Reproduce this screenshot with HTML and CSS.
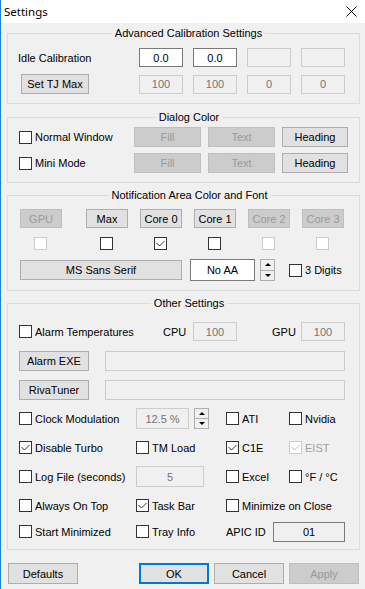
FILE: index.html
```html
<!DOCTYPE html>
<html lang="en">
<head>
    <meta charset="UTF-8">
    <meta name="viewport" content="width=device-width, initial-scale=1.0">
    <title>Settings</title>
    <link rel="stylesheet" href="styles.css">
</head>
<body>
<div class="window">
    <div class="titlebar">
        <span class="title">Settings</span>
        <svg class="close" width="11" height="11" viewBox="0 0 11 11"><path d="M0.5 0.5 10.5 10.5 M10.5 0.5 0.5 10.5"/></svg>
    </div>

    <div class="content">
        <fieldset class="group calib">
            <legend>Advanced Calibration Settings</legend>
            <div class="calib-grid">
                <span>Idle Calibration</span>
                <div class="edit">0.0</div>
                <div class="edit">0.0</div>
                <div class="edit off"></div>
                <div class="edit off"></div>
                <button class="btn tj">Set TJ Max</button>
                <div class="edit off">100</div>
                <div class="edit off">100</div>
                <div class="edit off">0</div>
                <div class="edit off">0</div>
            </div>
        </fieldset>

        <fieldset class="group dialog">
            <legend>Dialog Color</legend>
            <div class="dialog-grid">
                <label class="opt"><span class="box"></span>Normal Window</label>
                <button class="btn off">Fill</button>
                <button class="btn off">Text</button>
                <button class="btn">Heading</button>
                <label class="opt"><span class="box"></span>Mini Mode</label>
                <button class="btn off">Fill</button>
                <button class="btn off">Text</button>
                <button class="btn">Heading</button>
            </div>
        </fieldset>

        <fieldset class="group notify">
            <legend>Notification Area Color and Font</legend>
            <div class="cores">
                <button class="btn core off">GPU</button>
                <button class="btn core">Max</button>
                <button class="btn core">Core 0</button>
                <button class="btn core">Core 1</button>
                <button class="btn core off">Core 2</button>
                <button class="btn core off">Core 3</button>
                <span class="box off"></span>
                <span class="box"></span>
                <span class="box"><svg width="11" height="11" viewBox="0 0 11 11"><path d="M1.5 5 4.5 8 9.5 3"/></svg></span>
                <span class="box"></span>
                <span class="box off"></span>
                <span class="box off"></span>
            </div>
            <div class="font-row">
                <button class="btn font-btn">MS Sans Serif</button>
                <div class="edit white noaa">No AA</div>
                <span class="spin"><span><i class="up"></i></span><span><i class="down"></i></span></span>
                <label class="opt digits"><span class="box"></span>3 Digits</label>
            </div>
        </fieldset>

        <fieldset class="group other">
            <legend>Other Settings</legend>
            <div class="rows">
                <div class="row">
                    <label class="opt alarm"><span class="box"></span>Alarm Temperatures</label>
                    <span class="cap cpu">CPU</span>
                    <div class="edit off w44">100</div>
                    <span class="cap gpu">GPU</span>
                    <div class="edit off w44">100</div>
                </div>
                <div class="row">
                    <button class="btn exe">Alarm EXE</button>
                    <div class="edit off path"></div>
                </div>
                <div class="row">
                    <button class="btn exe">RivaTuner</button>
                    <div class="edit off path"></div>
                </div>
                <div class="row">
                    <label class="opt c1"><span class="box"></span>Clock Modulation</label>
                    <div class="c2">
                        <div class="edit off tall clock">12.5 %</div>
                        <span class="spin small"><span><i class="up"></i></span><span><i class="down"></i></span></span>
                    </div>
                    <label class="opt c3"><span class="box"></span>ATI</label>
                    <label class="opt"><span class="box"></span>Nvidia</label>
                </div>
                <div class="row">
                    <label class="opt c1"><span class="box"><svg width="11" height="11" viewBox="0 0 11 11"><path d="M1.5 5 4.5 8 9.5 3"/></svg></span>Disable Turbo</label>
                    <label class="opt c2"><span class="box"></span>TM Load</label>
                    <label class="opt c3"><span class="box"><svg width="11" height="11" viewBox="0 0 11 11"><path d="M1.5 5 4.5 8 9.5 3"/></svg></span>C1E</label>
                    <label class="opt dim"><span class="box off"><svg width="11" height="11" viewBox="0 0 11 11"><path d="M1.5 5 4.5 8 9.5 3"/></svg></span>EIST</label>
                </div>
                <div class="row">
                    <label class="opt c1"><span class="box"></span>Log File (seconds)</label>
                    <div class="c2"><div class="edit off tall log">5</div></div>
                    <label class="opt c3"><span class="box"></span>Excel</label>
                    <label class="opt"><span class="box"></span>°F / °C</label>
                </div>
                <div class="row">
                    <label class="opt c1"><span class="box"></span>Always On Top</label>
                    <label class="opt c2"><span class="box"><svg width="11" height="11" viewBox="0 0 11 11"><path d="M1.5 5 4.5 8 9.5 3"/></svg></span>Task Bar</label>
                    <label class="opt"><span class="box"></span>Minimize on Close</label>
                </div>
                <div class="row last">
                    <label class="opt c1"><span class="box"></span>Start Minimized</label>
                    <label class="opt c2"><span class="box"></span>Tray Info</label>
                    <span class="apic">APIC ID</span>
                    <div class="edit apic-id">01</div>
                </div>
            </div>
        </fieldset>

        <div class="footer">
            <button class="btn wide">Defaults</button>
            <button class="btn wide ok">OK</button>
            <button class="btn wide">Cancel</button>
            <button class="btn wide off">Apply</button>
        </div>
    </div>
</div>
</body>
</html>
```

FILE: styles.css
```css
body {
    margin: 0;
    background: #f0f0f0;
    font-family: "Liberation Sans", Arial, sans-serif;
    font-size: 11px;
    color: #000;
}
.window {
    height: 589px;
    border-left: 1px solid #1883d7;
    box-sizing: border-box;
}
.titlebar {
    height: 23px;
    background: #fff;
    display: flex;
    align-items: center;
    justify-content: space-between;
    padding: 0 8px 0 3px;
}
.title {
    font-family: "Noto Sans", sans-serif;
    font-size: 11.5px;
}
.close path {
    stroke: #000;
    stroke-width: 1;
    fill: none;
}
.content {
    padding: 0 5px 0 6px;
}

/* group boxes */
.group {
    margin: 5px 0 0;
    padding: 0 0 9px 11px;
    border: 1px solid #dcdcdc;
    min-width: 0;
}
.group legend {
    margin: 0 auto;
    padding: 0 3px;
    line-height: 15px;
}
.calib {
    margin-top: 3px;
    padding-top: 7px;
    padding-left: 10px;
}
.dialog {
    margin-top: 6px;
    padding-top: 2px;
}
.notify {
    padding-top: 6px;
    padding-left: 12px;
}
.other {
    padding-top: 10px;
    padding-bottom: 7px;
}

/* controls */
.btn {
    height: 20px;
    padding: 0;
    border: 1px solid #adadad;
    background: #e1e1e1;
    font: inherit;
    color: #000;
    box-sizing: border-box;
    white-space: nowrap;
}
.btn.off {
    background: #cccccc;
    border-color: #bfbfbf;
    color: #9a9a9a;
}
.edit {
    height: 19px;
    box-sizing: border-box;
    border: 1px solid #7a7a7a;
    background: #fff;
    display: flex;
    align-items: center;
    justify-content: center;
}
.edit.off {
    border-color: #cccccc;
    background: #f0f0f0;
    color: #747474;
}
.edit.tall {
    height: 21px;
}
.opt {
    display: flex;
    align-items: center;
    white-space: nowrap;
}
.box {
    width: 13px;
    height: 13px;
    box-sizing: border-box;
    border: 1px solid #333;
    background: #fff;
    margin-right: 3px;
    flex: none;
}
.box svg {
    display: block;
}
.box path {
    stroke: #333;
    stroke-width: 1;
    fill: none;
}
.box.off {
    border-color: #cccccc;
}
.box.off path {
    stroke: #bcbcbc;
}
.dim {
    color: #a0a0a0;
}
.spin {
    display: flex;
    flex-direction: column;
    width: 15px;
    height: 22px;
    flex: none;
}
.spin.small {
    height: 21px;
    margin-left: 5px;
}
.spin > span {
    flex: 1;
    display: flex;
    align-items: center;
    justify-content: center;
    background: #f0f0f0;
    border: 1px solid #adadad;
}
.spin > span + span {
    border-top: none;
}
.spin .up {
    border-left: 3px solid transparent;
    border-right: 3px solid transparent;
    border-bottom: 3px solid #000;
}
.spin .down {
    border-left: 3px solid transparent;
    border-right: 3px solid transparent;
    border-top: 3px solid #000;
}

/* advanced calibration */
.calib-grid {
    display: grid;
    grid-template-columns: 111px repeat(4, 44px);
    grid-template-rows: 19px 20px;
    column-gap: 10px;
    row-gap: 7px;
    align-items: center;
}
.tj {
    width: 68px;
    margin-left: 3px;
}

/* dialog color */
.dialog-grid {
    display: grid;
    grid-template-columns: 108px 67px 67px 66px;
    grid-template-rows: 20px 20px;
    column-gap: 7px;
    row-gap: 6px;
    align-items: center;
}

/* notification area */
.cores {
    display: grid;
    grid-template-columns: 66px repeat(5, 54px);
    grid-template-rows: 19px 13px;
    row-gap: 9px;
}
.core {
    width: 42px;
    height: 19px;
}
.cores .box {
    margin-left: 14px;
}
.font-row {
    display: flex;
    align-items: center;
    margin-top: 9px;
    height: 22px;
}
.font-btn {
    width: 162px;
}
.noaa {
    width: 65px;
    height: 22px;
    margin: 0 5px 0 8px;
}
.digits {
    margin-left: 14px;
}

/* other settings */
.rows {
    display: flex;
    flex-direction: column;
    gap: 8px;
}
.row {
    display: flex;
    align-items: center;
    height: 21px;
}
.row.last {
    margin-top: -3px;
}
.alarm {
    width: 144px;
}
.cpu {
    width: 30px;
}
.gpu {
    width: 29px;
    margin-left: 35px;
}
.w44 {
    width: 44px;
}
.exe {
    width: 70px;
}
.path {
    width: 240px;
    height: 20px;
    margin-left: 16px;
}
.c1 {
    width: 117px;
    flex: none;
}
.c2 {
    width: 90px;
    flex: none;
    display: flex;
    align-items: center;
}
.c3 {
    width: 63px;
    flex: none;
}
.clock {
    width: 53px;
}
.log {
    width: 68px;
}
.apic {
    width: 47px;
}
.apic-id {
    width: 72px;
    height: 20px;
    background: #f0f0f0;
}

/* dialog buttons */
.footer {
    display: flex;
    margin: 13px 0 0 1px;
}
.wide {
    width: 70px;
    height: 21px;
    margin-left: 5px;
}
.wide:first-child {
    margin-left: 0;
}
.wide.ok {
    margin-left: 61px;
    border: 2px solid #0078d7;
}
```
